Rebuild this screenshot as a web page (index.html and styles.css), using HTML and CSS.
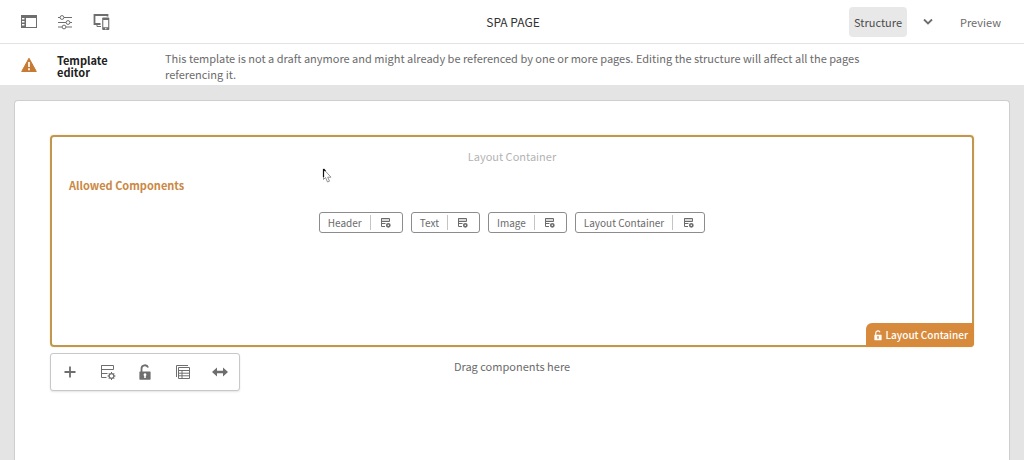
FILE: index.html
```html
<!DOCTYPE html>
<html lang="en">
<head>
<meta charset="utf-8">
<title>SPA Page</title>
<link rel="stylesheet" href="styles.css">
</head>
<body>
<svg class="defs" aria-hidden="true">
  <symbol id="policy" viewBox="0 0 16 16">
    <path d="M1.5 1.5h12v4h-12zM1.5 1.5v12M1.5 9.5h6M1.5 13.5h5" fill="none" stroke="currentColor"/>
    <circle cx="11.5" cy="12" r="2.4" fill="none" stroke="currentColor" stroke-width="1.3"/>
    <path d="M11.5 8v1.5M11.5 14.5V16M7.5 12H9M14 12h1.5M8.8 9.2l1 1M13.2 13.8l1 1M14.2 9.2l-1 1M9.8 13.8l-1 1" stroke="currentColor"/>
  </symbol>
  <symbol id="policy-small" viewBox="0 0 10 11">
    <path d="M.5 1.500h8v3h-8zM.5 1.500v8M.5 6.500h4M.5 9.500h3.500" fill="none" stroke="currentColor"/>
    <path d="M1 2h7v2H1z" fill="currentColor" opacity=".25"/>
    <circle cx="7.300" cy="8.300" r="1.600" fill="none" stroke="currentColor" stroke-width="1.600"/>
  </symbol>
  <symbol id="lock" viewBox="0 0 12 17">
    <path d="M2.500 8V4.700a3.400 3.400 0 0 1 6.600-1.200" fill="none" stroke="currentColor" stroke-width="1.800"/>
    <path fill="currentColor" fill-rule="evenodd" d="M1 7.500h10q.6 0 .6.600v7q0 .6-.6.600H1q-.6 0-.6-.6v-7q0-.6.600-.6zM6 9.300a1.500 1.500 0 0 0-.8 2.700v2h1.600v-2A1.500 1.500 0 0 0 6 9.300z"/>
  </symbol>
</svg>

<header class="topbar">
  <div class="tools">
    <button class="icon-btn" aria-label="Toggle side panel">
      <svg width="18" height="16" viewBox="0 0 18 16"><path fill="currentColor" fill-rule="evenodd" d="M1 1h16v13H1zM6 4v9h10V4zM2 4h2.500v1.500H2zM2 7h2.500v1.500H2zM2 10h2.500v1.500H2z"/></svg>
    </button>
    <button class="icon-btn" aria-label="Page information">
      <svg width="16" height="16" viewBox="0 0 16 16" fill="none" stroke="currentColor"><path d="M1 3.500h2M7 3.500h8M1 8.500h8M13 8.500h2M1 13h4M9 13h6"/><circle cx="5" cy="3.500" r="1.900"/><circle cx="11" cy="8.500" r="1.900"/><circle cx="7" cy="13" r="1.900"/></svg>
    </button>
    <button class="icon-btn" aria-label="Emulator">
      <svg width="18" height="18" viewBox="0 0 18 18"><path d="M15.500 3.500V2h-13v9h6" fill="none" stroke="currentColor" stroke-width="1.800"/><path fill="currentColor" fill-rule="evenodd" d="M11 4.500h5.500q.8 0 .8.800v11q0 .8-.8.800H11q-.8 0-.8-.8v-11q0-.8.800-.8zM11.300 7v7.200h4.900V7zM13 15.200v1h1.500v-1z"/><path d="M5 11v2.500h4" fill="none" stroke="currentColor"/></svg>
    </button>
  </div>
  <h1 class="title">SPA PAGE</h1>
  <div class="modes">
    <button class="mode mode-active">Structure</button>
    <button class="icon-btn" aria-label="Choose mode">
      <svg width="10" height="8" viewBox="0 0 10 8"><path d="M1 1.500l4 4 4-4" fill="none" stroke="currentColor" stroke-width="1.800"/></svg>
    </button>
    <button class="mode">Preview</button>
  </div>
</header>

<section class="notice">
  <svg class="notice-icon" width="16" height="16" viewBox="0 0 16 16" aria-hidden="true"><path d="M8 1.200L15.300 14.500H.7z" fill="currentColor" stroke="currentColor" stroke-linejoin="round"/><path d="M8 5v5M8 11.300v1.900" stroke="#fff" stroke-width="1.700"/></svg>
  <h2 class="notice-title">Template editor</h2>
  <p class="notice-text">This template is not a draft anymore and might already be referenced by one or more pages. Editing the structure will affect all the pages referencing it.</p>
</section>

<main class="stage">
  <div class="page">
    <section class="container">
      <p class="container-name">Layout Container</p>
      <h3 class="allowed">Allowed Components</h3>
      <ul class="components">
        <li class="component"><span class="component-name">Header</span><button class="policy" aria-label="Header policy"><svg width="10" height="11"><use href="#policy-small"/></svg></button></li>
        <li class="component"><span class="component-name">Text</span><button class="policy" aria-label="Text policy"><svg width="10" height="11"><use href="#policy-small"/></svg></button></li>
        <li class="component"><span class="component-name">Image</span><button class="policy" aria-label="Image policy"><svg width="10" height="11"><use href="#policy-small"/></svg></button></li>
        <li class="component"><span class="component-name">Layout Container</span><button class="policy" aria-label="Layout Container policy"><svg width="10" height="11"><use href="#policy-small"/></svg></button></li>
      </ul>
      <div class="badge"><svg width="8" height="11" viewBox="0 0 12 17"><use href="#lock"/></svg>Layout Container</div>
    </section>
    <div class="below">
      <div class="toolbar">
        <button class="icon-btn" aria-label="Insert component"><svg width="12" height="12" viewBox="0 0 12 12"><path d="M6 .5v11M.5 6h11" stroke="currentColor" stroke-width="1.800"/></svg></button>
        <button class="icon-btn" aria-label="Policy"><svg width="16" height="16"><use href="#policy"/></svg></button>
        <button class="icon-btn" aria-label="Unlock"><svg width="12" height="17"><use href="#lock"/></svg></button>
        <button class="icon-btn" aria-label="Group"><svg width="16" height="16" viewBox="0 0 16 16" fill="none" stroke="currentColor"><path d="M1.500 13V1.500h11.500M3.500 3.500h11v11h-11zM3.500 6.500h11M3.500 9.200h11M3.500 11.800h11M7 6.500v8"/></svg></button>
        <button class="icon-btn" aria-label="Layout"><svg width="16" height="12" viewBox="0 0 16 12"><path d="M0 6l5-4.500v3.300h6V1.500L16 6l-5 4.500V7.200H5v3.300z" fill="currentColor"/></svg></button>
      </div>
      <p class="drop">Drag components here</p>
    </div>
  </div>
</main>
<svg class="cursor" width="10" height="16" viewBox="0 0 10 16" aria-hidden="true"><path d="M1.500 1v10.500l2-2 2 4.500 2-.8-1.800-4H9z" fill="#fff" stroke="#888" stroke-width=".9"/><path d="M1.500 1v8M1.500 1l2 2" stroke="#111" fill="none" stroke-width="1.200"/></svg>
</body>
</html>
```

FILE: styles.css
```css
* { box-sizing: border-box; }

body {
  margin: 0;
  min-height: 100vh;
  display: flex;
  flex-direction: column;
  background: #e4e4e4;
  color: #6b6b6b;
  font: 11px/16px "Noto Sans CJK SC", "Open Sans", sans-serif;
  overflow-x: hidden;
}

h1, h2, h3, p, ul { margin: 0; padding: 0; font-weight: 400; }
button { border: 0; padding: 0; background: none; color: inherit; font: inherit; cursor: pointer; }
svg { display: block; flex: none; }
.defs { position: absolute; width: 0; height: 0; }

.topbar {
  display: grid;
  grid-template-columns: 1fr auto 1fr;
  align-items: center;
  height: 44px;
  padding: 0 18px 0 20px;
  background: #fff;
  border-bottom: 1px solid #e2e2e2;
}
.tools { display: flex; gap: 18px; }
.icon-btn { display: flex; align-items: center; justify-content: center; min-width: 18px; color: #6e6e6e; }
.title { font-size: 12px; color: #323232; }
.modes { display: flex; align-items: center; justify-content: flex-end; }
.mode { height: 30px; padding: 0 5px; border-radius: 4px; }
.mode-active { background: #e8e8e8; color: #4b4b4b; }
.modes .icon-btn { width: 42px; margin-right: 6px; }

.notice {
  display: grid;
  grid-template-columns: 16px 80px minmax(0, 720px);
  column-gap: 24px;
  padding: 6px 21px 3px;
  background: #fff;
}
.notice-icon { margin-top: 7px; color: #c67a33; }
.notice-title { width: 60px; padding-top: 4px; margin-left: -4px; font-size: 11px; line-height: 12px; font-weight: 700; color: #222; }

.stage { flex: 1; display: flex; padding: 15px 14px 0; }
.page {
  flex: 1;
  padding: 34px 35px 0;
  background: #fff;
  border: 1px solid #cecece;
  border-bottom: 0;
  border-radius: 4px 4px 0 0;
}

.container {
  position: relative;
  min-height: 212px;
  padding: 11px 17px;
  border: 2px solid #c1964f;
  border-radius: 4px;
  box-shadow: 0 0 2px #f3dfa8;
}
.container-name { text-align: center; color: #b3b3b3; }
.allowed { margin-top: 13px; font-size: 11px; font-weight: 700; color: #cb8843; }
.components { display: flex; justify-content: center; gap: 8px; margin-top: 19px; list-style: none; }
.component { display: flex; align-items: center; height: 21px; border: 1px solid #8c8c8c; border-radius: 3px; font-size: 10px; }
.component-name { padding: 0 8px; }
.policy { display: flex; align-items: center; justify-content: center; width: 32px; height: 15px; border-left: 1px solid #c4c4c4; }
.badge {
  position: absolute;
  right: -2px;
  bottom: -2px;
  display: flex;
  align-items: center;
  gap: 4px;
  height: 24px;
  padding: 0 6px 0 8px;
  border-radius: 6px 0 4px 0;
  background: #d78a3b;
  color: #fff;
  font-size: 10px;
  font-weight: 500;
}

.below { display: grid; grid-template-columns: 1fr auto 1fr; align-items: start; padding-top: 6px; }
.toolbar {
  display: flex;
  align-items: center;
  justify-content: space-between;
  width: 190px;
  height: 38px;
  padding: 0 10px;
  border: 1px solid #c8c8c8;
  border-radius: 3px;
  background: #fff;
  box-shadow: 0 1px 2px #e4e4e4;
}
.drop { padding-top: 5px; }

.cursor { position: absolute; left: 322px; top: 168px; }
```
